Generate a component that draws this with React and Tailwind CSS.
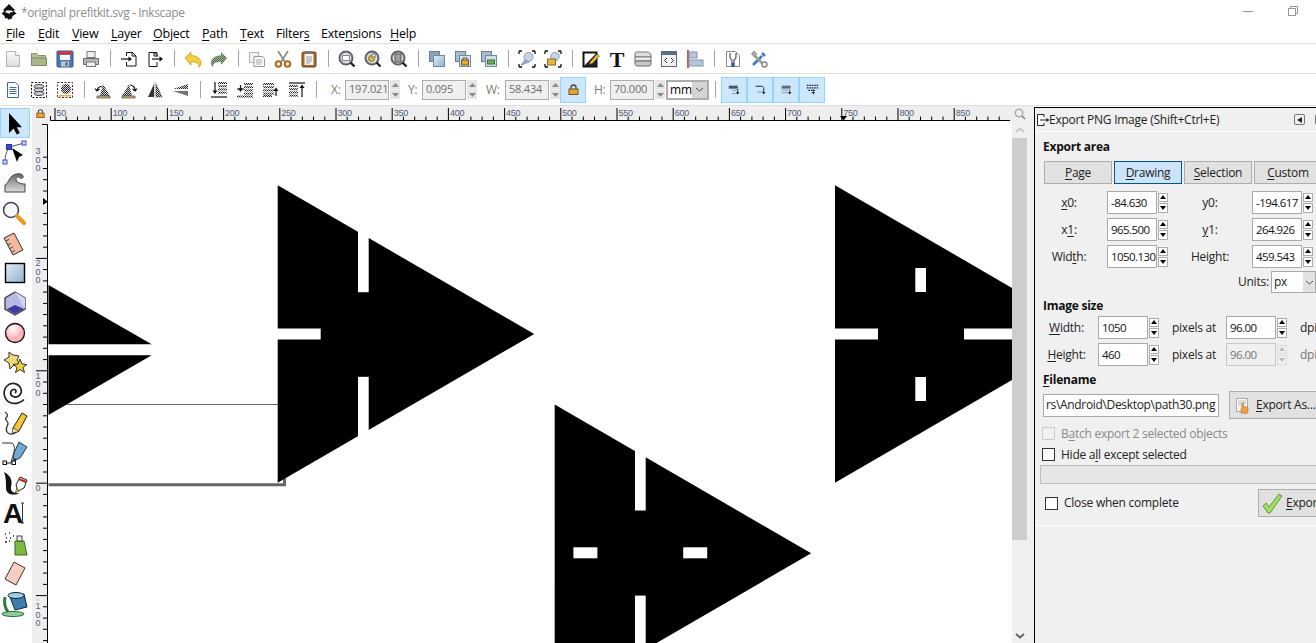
import React from "react";

const I = ({ s = 18, children }) => (
  <svg width={s} height={s} viewBox={`0 0 ${s} ${s}`} className="block shrink-0">{children}</svg>
);
const D = "url(#dith)";
const Defs = () => (
  <defs>
    <pattern id="dith" width="2" height="2" patternUnits="userSpaceOnUse">
      <rect width="2" height="2" fill="#ddd" />
      <rect width="1" height="1" fill="#222" />
      <rect x="1" y="1" width="1" height="1" fill="#222" />
    </pattern>
    <linearGradient id="gb" x1="0" y1="0" x2="1" y2="1"><stop offset="0" stopColor="#e4edf5" /><stop offset="1" stopColor="#8fb0cc" /></linearGradient>
    <linearGradient id="gg" x1="0" y1="0" x2="0" y2="1"><stop offset="0" stopColor="#666" /><stop offset="1" stopColor="#ddd" /></linearGradient>
    <radialGradient id="gp" cx="0.4" cy="0.3"><stop offset="0" stopColor="#fff" /><stop offset="1" stopColor="#ffb0b8" /></radialGradient>
    <linearGradient id="gn" x1="0" y1="0" x2="0" y2="1"><stop offset="0" stopColor="#fafafa" /><stop offset="1" stopColor="#dcdcdc" /></linearGradient>
  </defs>
);

const Mag = ({ inner }) => (
  <I>
    <circle cx="8" cy="8" r="6.5" fill="#d8dde2" stroke="#5c6268" strokeWidth="2" />
    <path d="M12.5 12.5L16.5 16.5" stroke="#222" strokeWidth="2.4" />
    {inner}
  </I>
);

const tb1 = [
  <I key="new"><path d="M2.5 1.5h9l4 4v11h-13z" fill="url(#gn)" stroke="#b5b5b5" /><path d="M11.5 1.5v4h4" fill="#fff" stroke="#b5b5b5" /></I>,
  <I key="open"><path d="M1.5 3.5h5l2 2h7v3h-14z" fill="#b9bd95" stroke="#888c68" /><path d="M1.5 8h15v7.5h-15z" fill="#aab58a" stroke="#7f8a62" /></I>,
  <I key="save"><rect x="1" y="1" width="16" height="16" rx="1" fill="#4d78b4" stroke="#2f5488" /><rect x="2" y="1.5" width="14" height="3" fill="#d23a3a" /><rect x="4" y="5" width="10" height="5" fill="#f4f4f4" /><rect x="5" y="11.5" width="8" height="5" fill="#bfc7d0" /><rect x="9.5" y="12.5" width="2" height="3" fill="#35527c" /></I>,
  <I key="print"><rect x="5" y="1.5" width="8" height="6" fill="#f2f2f2" stroke="#7d7d7d" /><path d="M1.5 8.5h15v6h-15z" fill="#b8b8b8" stroke="#6b6b6b" /><rect x="4.5" y="12" width="9" height="4.5" fill="#f0f0f0" stroke="#777" /></I>,
  "|",
  <I key="imp"><path d="M6.5 6V2.5h6l3.5 3.5v10H6.5V12" fill="#fff" stroke="#111" /><path d="M12 2.5v3.5h4" fill="none" stroke="#111" /><path d="M1 9h9" stroke="#111" strokeWidth="1.2" /><path d="M8.5 6.5L12 9l-3.5 2.5z" fill="#111" /></I>,
  <I key="exp"><path d="M11 6V2.5H3v14h8V12" fill="#fff" stroke="#111" /><path d="M8 2.5L12 6H8z" fill="#fff" stroke="#111" /><path d="M6 9h9" stroke="#111" strokeWidth="1.2" /><path d="M13.5 6.2L17 9l-3.5 2.8z" fill="#111" /></I>,
  "|",
  <I key="undo"><path d="M1 8l6-6v3.6c5 0 10 2.6 10 7.4 0 2-1 3.4-2 4.2.5-3.6-3-5.6-8-5.4V15z" fill="#f3cf3e" stroke="#c99c14" strokeWidth=".8" /></I>,
  <I key="redo"><path d="M17 8l-6-6v3.6C6 5.6 1 8.2 1 13c0 2 1 3.4 2 4.2-.5-3.6 3-5.6 8-5.4V15z" fill="#6f9a63" /><path d="M17 8l-6-6v3.6C6 5.6 1 8.2 1 13c0 2 1 3.4 2 4.2-.5-3.6 3-5.6 8-5.4V15z" fill={D} opacity=".35" /></I>,
  "|",
  <I key="copy"><path d="M1.5 2.5h9v10h-9z" fill="#f3f3f3" stroke="#b0b0b0" /><path d="M6 6.5h8.5l2 2v8H6z" fill="#fafafa" stroke="#999" /><path d="M8 10h6M8 12h6M8 14h5" stroke="#aaa" /></I>,
  <I key="cut"><path d="M4 1l7 11M14 1L7 12" stroke="#888" strokeWidth="1.6" /><circle cx="4.5" cy="14" r="2.8" fill="#fff" stroke="#b06a1a" strokeWidth="2" /><circle cx="13.5" cy="14" r="2.8" fill="#fff" stroke="#b06a1a" strokeWidth="2" /></I>,
  <I key="paste"><rect x="2" y="2" width="14" height="15" rx="1.5" fill="#a86a28" stroke="#6d431a" /><rect x="4.5" y="4" width="9" height="11" fill="#f7f7f7" /><rect x="6" y="1" width="6" height="3" fill="#777" /><path d="M6 7h6M6 9h6M6 11h6M6 13h4" stroke="#999" /></I>,
  "|",
  <Mag key="z1" inner={<rect x="4.5" y="5.5" width="7" height="5" fill="#fff" stroke="#8a8a8a" />} />,
  <Mag key="z2" inner={<><circle cx="7.5" cy="8.5" r="3" fill="#e8b23c" stroke="#8a6a20" /><rect x="8" y="4" width="3" height="3" fill="#fff" stroke="#777" /></>} />,
  <Mag key="z3" inner={<rect x="5" y="4" width="6" height="8" fill="#9aa0a6" stroke="#555" />} />,
  "|",
  <I key="dup"><rect x="1.5" y="1.5" width="10" height="10" fill="#8aa4bb" stroke="#657f96" /><rect x="5.5" y="5.5" width="11" height="11" fill="url(#gb)" stroke="#6d8aa4" /></I>,
  <I key="clo"><rect x="1.5" y="1.5" width="10" height="10" fill="#a8bccc" stroke="#657f96" /><rect x="5.5" y="5.5" width="11" height="11" fill="#d8e4ee" stroke="#6d8aa4" /><rect x="7.5" y="10" width="7" height="5" fill="#e8a92c" stroke="#7a5510" /><path d="M9 10V8h4v2" fill="none" stroke="#555" /></I>,
  <I key="unl"><rect x="1.5" y="1.5" width="10" height="10" fill="#a8bccc" stroke="#657f96" /><rect x="5.5" y="5.5" width="11" height="11" fill="#cfdde6" stroke="#6d8aa4" /><rect x="7.5" y="10" width="7" height="4" fill="#6db05a" stroke="#3f6e33" /></I>,
  "|",
  <I key="grp"><path d="M1 1h3M1 1v3M17 1h-3M17 1v3M1 17h3M1 17v-3M17 17h-3M17 17v-3" stroke="#111" strokeWidth="1.3" /><circle cx="10.5" cy="7" r="4.5" fill="#c5d6e6" stroke="#84a0bb" /><path d="M3 15l4-5 4 2z" fill="#9fb8cf" stroke="#7c97b0" /></I>,
  <I key="ung"><path d="M1 1h3M1 1v3M17 1h-3M17 1v3M1 17h3M1 17v-3M17 17h-3M17 17v-3" stroke="#111" strokeWidth="1.3" /><circle cx="11" cy="6.5" r="4.2" fill="#c5d6e6" stroke="#84a0bb" /><rect x="3.5" y="9" width="8" height="6" fill="#eab53c" stroke="#8c6a1a" /></I>,
  "|",
  <I key="fil"><rect x="1.5" y="2.5" width="13" height="14" fill="#fff" stroke="#111" strokeWidth="2" /><path d="M2 16L14.5 3v13z" fill="#222" /><path d="M8 12l7-8 2.4 2-7 7.6-3.4 1z" fill="#edbf2e" stroke="#333" strokeWidth=".6" /></I>,
  <svg key="T" width="18" height="30" viewBox="0 -6 18 30" className="block"><text x="9" y="16.500" textAnchor="middle" fontFamily="'Liberation Serif',serif" fontWeight="700" fontSize="22" fill="#111">T</text></svg>,
  <I key="lay"><path d="M1 4c0-1.5 1-2 2-2h10c2 0 4 1.5 4 3v2H1z" fill="#dcdfe2" stroke="#777" /><path d="M1 7h16v4H1z" fill="#eceeef" stroke="#777" /><path d="M1 11h16v3c0 1-1 2-2 2H4c-2 0-3-1-3-3z" fill="#c4c8cc" stroke="#666" /></I>,
  <I key="xml"><rect x="1.5" y="1.5" width="15" height="15" fill="#f2f2f2" stroke="#666" /><rect x="1.5" y="1.5" width="15" height="3.5" fill="#5b6f86" /><path d="M7 8l-2.5 2.5L7 13M11 8l2.5 2.5L11 13" fill="none" stroke="#333" /></I>,
  <I key="ali"><rect x="1" y="0" width="2" height="18" fill="#d9534f" /><rect x="3" y="2" width="8" height="6" fill="#b4c8da" stroke="#7e98ad" /><rect x="3" y="10" width="14" height="6" fill="#b4c8da" stroke="#7e98ad" /></I>,
  "|",
  <I key="prf"><path d="M2.5 1.5h9l4 4v11h-13z" fill="#fff" stroke="#888" /><path d="M6 3v4c0 1.5 1 2.5 2 3v6h2v-6c1-.5 2-1.5 2-3V3" fill="none" stroke="#555" strokeWidth="1.2" /><path d="M7.5 13h3v4h-3z" fill="#2d5fa8" /></I>,
  <I key="tls"><path d="M3 15L12 6M12 3l3 3" stroke="#3f79c0" strokeWidth="2.6" /><path d="M14 15L5 6" stroke="#9a9a9a" strokeWidth="2.6" /><path d="M1.5 3.5L4 1l3 3-3 3z" fill="#aaa" stroke="#777" strokeWidth=".6" /><circle cx="14.5" cy="14.5" r="2.5" fill="#fff" stroke="#888" strokeWidth="1.5" /></I>,
];

const Lines = ({ y0 = 2, n = 4, x = 7, w = 9 }) => (
  <>{Array.from({ length: n }).map((_, i) => <rect key={i} x={x} y={y0 + i * 3.2} width={w} height="2" fill={D} />)}</>
);

const tb2a = [
  <I key="a"><path d="M3.5 1.5h8l3 3v12h-11z" fill="#fff" stroke="#3a6db0" /><path d="M5.5 6.5h7M5.5 8.5h7M5.5 10.5h7M5.5 12.5h7" stroke="#3a6db0" /></I>,
  <I key="b"><rect x="1.5" y="1.5" width="15" height="15" fill="#fff" stroke="#111" strokeDasharray="2 1.5" /><ellipse cx="9" cy="5.5" rx="5" ry="2" fill="#cbd3d9" stroke="#444" /><ellipse cx="9" cy="9" rx="5" ry="2" fill="#cbd3d9" stroke="#444" /><ellipse cx="9" cy="12.5" rx="5" ry="2" fill="#cbd3d9" stroke="#444" /></I>,
  <I key="c"><rect x="1.5" y="1.5" width="15" height="15" fill="#fff" stroke="#6b1f1f" strokeDasharray="2 1.5" /><path d="M3 14h12v1.5H3z" fill="#e0b040" /><circle cx="10" cy="8" r="5" fill={D} /></I>,
  "|",
  <I key="d"><path d="M9 3l7 12H6z" fill={D} /><path d="M3 15h13v2H3z" fill="#dcc27a" stroke="#222" strokeWidth=".6" /><path d="M8 5.5A5 5 0 0 0 3 9M1 7.5L3 10l2.5-2" fill="none" stroke="#111" strokeWidth="1.2" /></I>,
  <I key="e"><path d="M9 3L2 15h10z" fill={D} /><path d="M2 15h13v2H2z" fill="#dcc27a" stroke="#222" strokeWidth=".6" /><path d="M10 4a5 5 0 0 1 5 5M17 7.5L15 10l-2.5-2" fill="none" stroke="#111" strokeWidth="1.2" /></I>,
  <I key="f"><path d="M8 3v13H2z" fill="#333" /><path d="M10 3v13h6z" fill={D} stroke="#444" strokeWidth=".5" /><path d="M9 1v16" stroke="#888" strokeDasharray="1.5 1" /></I>,
  <I key="g"><path d="M1 8l15-5v5z" fill={D} /><path d="M1 10l15 5v-5z" fill="#444" opacity=".75" /></I>,
  "|",
  <I key="h"><Lines y0={1} n={4} x={8} w={9} /><path d="M5 1v11" stroke="#111" strokeWidth="1.2" /><path d="M2.500 9.500L5 13l2.500-3.500z" fill="#111" /><path d="M1 16h16" stroke="#111" strokeWidth="1.2" /></I>,
  <I key="i"><Lines y0={2} n={4} x={8} w={9} /><path d="M1 8h7" stroke="#111" strokeWidth="1" /><path d="M4.500 4v5" stroke="#111" strokeWidth="1.2" /><path d="M2 7.500L4.500 11 7 7.500z" fill="#111" /><path d="M1 15.500h16" stroke={D} strokeWidth="2" /></I>,
  <I key="j"><Lines y0={2} n={4} x={1} w={11} /><path d="M14 15V8" stroke="#111" strokeWidth="1.2" /><path d="M11.500 10L14 6.500 16.500 10z" fill="#111" /><path d="M1 15h9" stroke={D} strokeWidth="2" /></I>,
  <I key="k"><Lines y0={4} n={4} x={1} w={9} /><path d="M14 16V5" stroke="#111" strokeWidth="1.2" /><path d="M11.500 7L14 3.500 16.500 7z" fill="#111" /><path d="M1 2h16" stroke="#111" strokeWidth="1.2" /></I>,
  "|",
];

const Btn = ({ children }) => <div className="flex h-full w-[26px] shrink-0 items-center justify-center">{children}</div>;
const Sep = ({ h = "h-[17px]" }) => <div className="flex h-full w-[12px] shrink-0 items-center justify-center"><div className={`w-px bg-[#a5a5a5] ${h}`} /></div>;
const renderBar = (arr) => arr.map((x, i) => (x === "|" ? <Sep key={i} /> : <Btn key={i}>{x}</Btn>));

const TSpin = () => (
  <div className="flex h-[19px] w-[10px] shrink-0 flex-col gap-px bg-[#f0f0f0]">
    <div className="flex flex-1 items-center justify-center bg-[#e6e6e6]"><svg width="7" height="4" className="block"><path d="M3.5 0L7 4H0z" fill="#8a8a8a" /></svg></div>
    <div className="flex flex-1 items-center justify-center bg-[#e6e6e6]"><svg width="7" height="4" className="block"><path d="M3.5 4L7 0H0z" fill="#8a8a8a" /></svg></div>
  </div>
);
const TField = ({ v }) => (
  <div className="flex shrink-0 items-center">
    <div className="flex h-[20px] w-[44px] items-center border border-[#adadad] bg-[#f0f0f0] pl-[3px] text-[11px] tracking-[-0.2px] text-[#6d6d6d]">{v}</div>
    <div className="ml-px"><TSpin /></div>
  </div>
);
const HiBtn = ({ children }) => <div className="flex h-[26px] w-[26px] shrink-0 items-center justify-center border border-[#99d1ff] bg-[#cce8ff]">{children}</div>;
const Lock = ({ s = 11 }) => (
  <svg width={s} height={s} viewBox="0 0 11 11" className="block"><path d="M3 5V3.2C3 1.8 4 1 5.5 1S8 1.8 8 3.2V5" fill="none" stroke="#444" strokeWidth="1.3" /><rect x="1" y="5" width="9" height="5.5" fill="#e9a62e" stroke="#7a5210" /></svg>
);
const Snap = ({ k }) => (
  <svg width="13" height="13" viewBox="0 0 16 16" className="block">
    {k === 0 && <><path d="M1 4h11M1 6h11" stroke="#222" strokeWidth="1.4" /><path d="M5 9h7M5 13h7" stroke="#888" /><path d="M12 7v6" stroke="#222" /><path d="M10 11l2 3 2-3z" fill="#222" /></>}
    {k === 1 && <><path d="M2 4h7c2 0 3 1 3 3v5" fill="none" stroke="#222" strokeWidth="1.2" /><path d="M4 11h8" stroke="#888" /><path d="M10 11l2 3 2-3z" fill="#222" /></>}
    {k === 2 && <><path d="M2 4h11M2 6h11" stroke="#444" strokeWidth="1.4" /><path d="M2 9h8M2 12h8" stroke="#888" /><path d="M12 8v5" stroke="#222" /><path d="M10 11l2 3 2-3z" fill="#222" /></>}
    {k === 3 && <><path d="M1 3h14M1 6h14" stroke="#222" strokeWidth="1.6" strokeDasharray="2 1" /><path d="M3 9h9" stroke="#222" strokeWidth="1.6" strokeDasharray="2 1" /><path d="M9 8v4" stroke="#222" /><path d="M7 11l2 3 2-3z" fill="#222" /></>}
  </svg>
);

const tools = [
  <path key="s" d="M9 5v20l4.600-4.400 3.200 6 3-1.600-3-5.800H22z" fill="#000" />,
  <g key="n"><path d="M5 24C5 15 8 11 10 9M10 9L24 5" fill="none" stroke="#555" /><path d="M12 10l11 7-4 2-2 5z" fill="#000" /><rect x="6.500" y="6.500" width="5" height="5" fill="#3848d8" stroke="#2430a0" /><rect x="22" y="3" width="4" height="4" fill="#d8dcff" stroke="#3848d8" /><rect x="3" y="22" width="4" height="4" fill="#d8dcff" stroke="#3848d8" /></g>,
  <g key="t"><path d="M5 24v-7c3-1 3-5 7-9 4-3 10-3 11 0 1 2-2 3-3 2-1-2-4-1-4 1 0 3 4 5 9 5v8z" fill="url(#gg)" stroke="#444" /></g>,
  <g key="z"><circle cx="11" cy="12" r="7.500" fill="#f4f8fb" stroke="#445" strokeWidth="1.600" /><path d="M17 18l7 7" stroke="#e99a1e" strokeWidth="4.200" strokeLinecap="round" /></g>,
  <g key="m"><path d="M4 10l10-5 9 17-10 5z" fill="#f2b9a0" stroke="#333" /><path d="M6 13l3-1.600M8 17l3-1.600M10 20.500l3-1.600M12 24l3-1.600" stroke="#444" /></g>,
  <g key="r"><rect x="5.500" y="5.500" width="19" height="19" fill="url(#gb)" stroke="#000" strokeWidth="1.400" /></g>,
  <g key="3"><path d="M15 4l10 6v11l-10 6-10-6V10z" fill="#b8b8e8" stroke="#444" strokeWidth="1.400" /><path d="M15 4l10 6v11z" fill="#d4d4f2" /><path d="M7 21l8-4 9 4-9 5z" fill="#3c3ca0" /></g>,
  <circle key="e" cx="15" cy="15" r="9.500" fill="url(#gp)" stroke="#111" strokeWidth="1.300" />,
  <g key="st"><path d="M9 4l4 3 6 1-2 4 3 5-6 0-4 4-1-6-5-3 5-3z" fill="#f1d878" stroke="#333" /><path d="M20 11l2 5 5 .5-4 3 1.500 5-4.500-3-4.500 3 1.500-5-4-3 5-.5z" fill="#f5d23a" stroke="#333" /></g>,
  <path key="sp" d="M15 15c2-1.500 1-4-1.500-3.500-3.500.7-4 5.500-.5 7 5 2 9.500-2.500 8-7.500-2-6-10-7.500-14-3-5 5-3 14 3 16.500 5 2 11 .5 14-3" fill="none" stroke="#222" strokeWidth="1.700" />,
  <g key="pc"><path d="M13 20l9-15 5 3-8 15-6 3z" fill="#f4c62c" stroke="#222" /><path d="M13 20l-1 6 7-3z" fill="#f7e6c0" stroke="#222" strokeWidth=".6" /><path d="M5 4c3 2 3 4 1 6s3 3 2 6-3 5-1 8 6 2 9 0" fill="none" stroke="#333" strokeWidth="1.300" /></g>,
  <g key="pn"><path d="M2 5h10c5 3 1 12-1 19" fill="none" stroke="#333" /><rect x="3" y="23" width="3.500" height="3.500" fill="#fff" stroke="#111" /><rect x="12" y="23" width="3.500" height="3.500" fill="#fff" stroke="#111" /><path d="M6.500 25H12" stroke="#111" /><path d="M19 4l8 5-7 11-7 3 1-8z" fill="#6fa9d6" stroke="#333" /><path d="M15 20l-1.500 3 3-1z" fill="#111" /></g>,
  <g key="cl"><path d="M4 4c6 3 9 8 7 15-1 4 3 7 9 6-6 3-14 2-14-5 0-6 0-11-2-16z" fill="#111" /><path d="M16 17l4-8 7 3-3 8-6 3z" fill="#fff" stroke="#222" /><path d="M19 10l8 3-1.500 2-7-3z" fill="#c22" /><path d="M17 20l-2 5 4-2z" fill="#e6b52c" stroke="#222" strokeWidth=".5" /></g>,
  <g key="tx"><text x="13" y="25" textAnchor="middle" fontFamily="'Liberation Sans',sans-serif" fontWeight="700" fontSize="28" fill="#111">A</text><path d="M21 5h3M22.500 5v20M21 25h3" stroke="#333" /></g>,
  <g key="sy"><path d="M15 13h9l3 14h-12z" fill="#7cba3e" stroke="#3b6b1c" /><rect x="17" y="8" width="5" height="5" fill="#eee" stroke="#444" /><path d="M5 6h1M9 5h1M13 8h1M6 10h1M10 10h1M5 14h2M9 13h1" stroke="#222" strokeWidth="1.600" /></g>,
  <path key="er" d="M14 4l11 6-9 17-11-6z" fill="#f7cfc0" stroke="#333" />,
  <g key="bk"><path d="M10 9l14-3 3 13-12 3z" fill="#3c7fae" stroke="#123" /><ellipse cx="16" cy="7.500" rx="8" ry="3" fill="#9fd0ea" stroke="#123" /><path d="M5 9c-1 5 0 11 3 15" fill="none" stroke="#2c7a3f" strokeWidth="3" /><ellipse cx="13" cy="26" rx="11" ry="2.500" fill="#8fd09a" stroke="#2c6a3a" /></g>,
];

const hTicks = Array.from({ length: 85 }, (_, k) => 55 + 11.24 * k);
const HRuler = () => (
  <svg width="964" height="15" viewBox="48 106 964 15" className="block shrink-0">
    <path d="M50.500 116V120.500H1010" fill="none" stroke="#000" />
    {hTicks.filter((x) => x < 1010).map((x, k) => (
      <path key={k} d={`M${x.toFixed(1)} ${k % 5 === 0 ? 108 : 116.5}V120`} stroke="#000" />
    ))}
    {hTicks.filter((x, k) => k % 5 === 0 && x < 1005).map((x, k) => (
      <text key={k} x={x + 1.5} y="115.500" fontFamily="'Liberation Sans',sans-serif" fontSize="9" fill="#4d5a78">{50 + 50 * k}</text>
    ))}
    <path d="M840 116h7l-3.500 4.500z" fill="#000" />
  </svg>
);

const vTicks = [];
for (let k = -29; k < 15; k++) vTicks.push({ y: 483.2 + 11.24 * k, k });
const VRuler = () => (
  <svg width="16" height="522" viewBox="32 121 16 522" className="block shrink-0 bg-[#eeeeee]">
    <path d="M42 124.500H47.500V643" fill="none" stroke="#000" />
    {vTicks.filter((t) => t.y > 127).map((t) => (
      <path key={t.k} d={`M${t.k % 10 === 0 ? 36 : 43} ${t.y.toFixed(1)}H47`} stroke="#000" />
    ))}
    {[[146.0, "300"], [258.4, "200"], [370.8, "100"]].map(([y, l]) =>
      l.split("").map((c, i) => (
        <text key={l + i} x="38" y={y + 8 + i * 8.5} textAnchor="middle" fontFamily="'Liberation Sans',sans-serif" fontSize="9" fill="#5d5d70">{c}</text>
      ))
    )}
    <text x="38" y="491" textAnchor="middle" fontFamily="'Liberation Sans',sans-serif" fontSize="9" fill="#5d5d70">0</text>
    <path d="M36 600H39" stroke="#bbb" />
    {"100".split("").map((c, i) => (
      <text key={i} x="38" y={609 + i * 8.5} textAnchor="middle" fontFamily="'Liberation Sans',sans-serif" fontSize="9" fill="#5d5d70">{c}</text>
    ))}
    <path d="M43 198l4.500 3.500-4.500 3.500z" fill="#000" />
  </svg>
);

const Tri = ({ x, y, mode }) => {
  const cy = y + 148.8;
  return (
    <g>
      <path d={`M${x} ${y}L${x + 256.5} ${cy}L${x} ${y + 297.6}z`} fill="#000" />
      {mode === "long" && (
        <>
          <rect x={x + 80.3} y={y + 30} width="10.700" height={cy - 41.8 - y - 30} fill="#fff" />
          <rect x={x + 80.3} y={cy + 42.8} width="10.700" height="80" fill="#fff" />
          <rect x={x - 1} y={cy - 5.5} width="44" height="11" fill="#fff" />
        </>
      )}
      {mode === "short" && (
        <>
          <rect x={x + 80.3} y={cy - 66} width="10.700" height="24" fill="#fff" />
          <rect x={x + 80.3} y={cy + 43} width="10.700" height="24" fill="#fff" />
          <rect x={x - 1} y={cy - 5.5} width="44" height="11" fill="#fff" />
          <rect x={x + 129} y={cy - 5.5} width="60" height="11" fill="#fff" />
        </>
      )}
      {mode === "d" && (
        <>
          <rect x={x + 80.3} y={y + 30} width="10.700" height={cy - 42.8 - y - 30} fill="#fff" />
          <rect x={x + 80.3} y={cy + 42.3} width="10.700" height="120" fill="#fff" />
          <rect x={x + 18.7} y={cy - 6} width="24" height="11" fill="#fff" />
          <rect x={x + 128.5} y={cy - 6} width="24" height="11" fill="#fff" />
        </>
      )}
    </g>
  );
};

const Canvas = () => (
  <svg width="964" height="522" viewBox="48 121 964 522" className="block shrink-0 bg-white">
    <path d="M60 404.500H278" stroke="#666" />
    <path d="M48.500 484.700H284.500V478" fill="none" stroke="#666" strokeWidth="3" />
    <path d="M48.500 285L151.700 344.300H48.500zM48.500 355.300H151.700L48.500 415z" fill="#000" />
    <Tri x={277.7} y={185.2} mode="long" />
    <Tri x={835} y={185.2} mode="short" />
    <Tri x={554.7} y={404.5} mode="d" />
  </svg>
);

const Scrollbar = () => (
  <div className="flex h-[522px] w-[15px] shrink-0 flex-col items-center bg-[#f0f0f0]">
    <div className="flex h-[17px] w-full items-center justify-center pt-[1px]">
      <svg width="10" height="6" className="block"><path d="M1 5l4-3.500L9 5" fill="none" stroke="#c8c8c8" strokeWidth="2" /></svg>
    </div>
    <div className="h-[402px] w-full bg-[#cdcdcd]" />
    <div className="flex-1" />
    <div className="flex h-[10px] w-full items-start justify-center">
      <svg width="10" height="6" className="block"><path d="M1 1l4 3.500L9 1" fill="none" stroke="#606060" strokeWidth="2" /></svg>
    </div>
  </div>
);

const DSpin = ({ off }) => {
  const f = off ? "#bbb" : "#000";
  const b = off ? "border-[#dcdcdc] bg-[#f0f0f0]" : "border-[#adadad] bg-white";
  return (
    <div className="flex h-[20px] w-[10px] shrink-0 flex-col gap-px">
      <div className={`flex flex-1 items-center justify-center border ${b}`}><svg width="6" height="4" className="block"><path d="M3 0l3 4H0z" fill={f} /></svg></div>
      <div className={`flex flex-1 items-center justify-center border ${b}`}><svg width="6" height="4" className="block"><path d="M3 4l3-4H0z" fill={f} /></svg></div>
    </div>
  );
};
const DField = ({ v, off }) => (
  <div className="flex shrink-0 items-center gap-px">
    <div className={`flex h-[23px] w-[50px] items-center overflow-hidden whitespace-nowrap border pl-[3px] text-[11.5px] tracking-[-0.55px] ${off ? "border-[#c8c8c8] bg-[#f0f0f0] text-[#777]" : "border-[#a9a9a9] bg-white text-[#111]"}`}>{v}</div>
    <DSpin off={off} />
  </div>
);
const U = ({ children }) => <span className="underline underline-offset-2">{children}</span>;
const Head = ({ children, cls }) => <div className={`h-[16px] font-bold leading-[16px] text-[#111] ${cls}`}>{children}</div>;
const AreaBtn = ({ children, on }) => (
  <div className={`flex h-[23px] w-[68px] shrink-0 items-center justify-center border ${on ? "border-[#005499] bg-[#cce4f7]" : "border-[#adadad] bg-[#e1e1e1]"}`}>{children}</div>
);
const Row = ({ a, v1, b, v2 }) => (
  <div className="flex h-[23px] items-center">
    <div className="mr-[12px] w-[52px] shrink-0 text-center">{a}</div>
    <DField v={v1} />
    <div className="w-[84px] shrink-0 text-center">{b}</div>
    <DField v={v2} />
  </div>
);
const Check = ({ off }) => <div className={`h-[13px] w-[13px] shrink-0 border ${off ? "border-[#cccccc] bg-[#f0f0f0]" : "border-[#333] bg-white"}`} />;

const Dock = () => (
  <div className="mt-px flex h-[536px] w-[282px] shrink-0 flex-col overflow-hidden border-l border-t border-black bg-[#f0f0f0] text-[#222]">
    <div className="flex h-[24px] shrink-0 items-center border-b border-white">
      <div className="ml-px">
        <svg width="14" height="14" viewBox="0 0 14 14" className="block"><path d="M8 4V1.500H1.500v11H8V10" fill="#fff" stroke="#222" /><path d="M4 7h8" stroke="#222" /><path d="M10.500 5L13.500 7l-3 2z" fill="#222" /></svg>
      </div>
      <div className="-ml-px whitespace-nowrap">Export PNG Image (Shift+Ctrl+E)</div>
      <div className="ml-auto mr-[-10px] flex items-center gap-[10px]">
        <div className="flex h-[11px] w-[11px] items-center justify-center rounded-[2px] border border-[#777]"><svg width="5" height="6" className="block"><path d="M5 0v6L0 3z" fill="#222" /></svg></div>
        <div className="h-[11px] w-[11px] rounded-[2px] border border-[#777]" />
      </div>
    </div>
    <div className="flex flex-1 flex-col pl-[8px]">
      <Head cls="mt-[7px]">Export area</Head>
      <div className="ml-px mt-[6px] flex gap-[2px]">
        <AreaBtn><span><U>P</U>age</span></AreaBtn>
        <AreaBtn on><span><U>D</U>rawing</span></AreaBtn>
        <AreaBtn><span><U>S</U>election</span></AreaBtn>
        <AreaBtn><span><U>C</U>ustom</span></AreaBtn>
      </div>
      <div className="mt-[7px]"><Row a={<span><U>x</U>0:</span>} v1="-84.630" b={<span>y0:</span>} v2="-194.617" /></div>
      <div className="mt-[4px]"><Row a={<span>x<U>1</U>:</span>} v1="965.500" b={<span><U>y</U>1:</span>} v2="264.926" /></div>
      <div className="mt-[4px]"><Row a={<span>Wid<U>t</U>h:</span>} v1="1050.130" b={<span>Height:</span>} v2="459.543" /></div>
      <div className="ml-[195px] mt-[3px] flex h-[22px] items-center">
        <span className="w-[33px] shrink-0">Units:</span>
        <div className="flex h-[22px] w-[45px] shrink-0 items-center justify-between border border-[#a9a9a9] bg-white pl-[2px]">
          <span>px</span>
          <div className="flex h-full w-[12px] items-center bg-[#e1e1e1] pl-[2px]"><svg width="9" height="5" className="block"><path d="M1 1l3.500 3L8 1" fill="none" stroke="#555" /></svg></div>
        </div>
      </div>
      <Head cls="mt-[5px]">Image size</Head>
      <div className="mt-[2px] flex h-[23px] items-center">
        <div className="mr-[8px] w-[47px] shrink-0 text-center"><U>W</U>idth:</div>
        <DField v="1050" />
        <div className="ml-[13px] w-[54px] shrink-0 whitespace-nowrap">pixels at</div>
        <DField v="96.00" />
        <div className="ml-[13px]">dpi</div>
      </div>
      <div className="mt-[4px] flex h-[23px] items-center">
        <div className="mr-[8px] w-[47px] shrink-0 text-center"><U>H</U>eight:</div>
        <DField v="460" />
        <div className="ml-[13px] w-[54px] shrink-0 whitespace-nowrap">pixels at</div>
        <DField v="96.00" off />
        <div className="ml-[13px] text-[#777]">dpi</div>
      </div>
      <Head cls="mt-[6px]"><U>F</U>ilename</Head>
      <div className="mt-[3px] flex h-[28px] items-center">
        <div className="flex h-[23px] w-[176px] shrink-0 items-center overflow-hidden whitespace-nowrap border border-[#a9a9a9] bg-white pl-[2px] tracking-[-0.33px]">rs\Android\Desktop\path30.png</div>
        <div className="ml-[10px] flex h-[28px] w-[100px] shrink-0 items-center border border-[#adadad] bg-[#e1e1e1] pl-[5px]">
          <svg width="17" height="17" viewBox="0 0 17 17" className="mr-[4px] block shrink-0"><path d="M1.500 1.500h11v13h-11z" fill="#fafafa" stroke="#aaa" /><path d="M3 4h8M3 6h8M3 8h6" stroke="#bbb" /><path d="M6 16v-4l1-3V6h1.500v4l1-.5 1 .5 1-.5 1.500 1V14l-1 2.500z" fill="#f0a040" stroke="#a8641c" strokeWidth=".5" /></svg>
          <span className="whitespace-nowrap"><U>E</U>xport As...</span>
        </div>
      </div>
      <div className="-ml-px mt-[8px] flex h-[13px] items-center text-[#8a8a8a]">
        <Check off />
        <span className="ml-[6px] whitespace-nowrap">B<U>a</U>tch export 2 selected objects</span>
      </div>
      <div className="-ml-px mt-[8px] flex h-[13px] items-center">
        <Check />
        <span className="ml-[6px] whitespace-nowrap">Hide a<U>l</U>l except selected</span>
      </div>
      <div className="-ml-[3px] mt-[4px] h-[19px] w-[290px] shrink-0 border border-[#bcbcbc] bg-[#e6e6e6]" />
      <div className="mt-[5px] flex h-[28px] items-center">
        <div className="ml-[2px]"><Check /></div>
        <span className="ml-[6px] w-[194px] shrink-0 whitespace-nowrap">Close when complete</span>
        <div className="flex h-[28px] w-[70px] shrink-0 items-center border border-[#adadad] bg-[#e1e1e1] pl-[3px]">
          <svg width="21" height="21" viewBox="0 0 21 21" className="mr-[3px] block shrink-0"><path d="M1 13l3-3 3 4L17 1l3 2L8 20h-2z" fill="#a4dc5c" stroke="#5b9a35" /></svg>
          <span><U>E</U>xport</span>
        </div>
      </div>
      <div className="-ml-[8px] mt-[8px] w-[290px] border-t border-white" />
    </div>
  </div>
);

const menu = [
  ["w-[32px]", <span key="1"><U>F</U>ile</span>],
  ["w-[34px]", <span key="2"><U>E</U>dit</span>],
  ["w-[39px]", <span key="3"><U>V</U>iew</span>],
  ["w-[42px]", <span key="4"><U>L</U>ayer</span>],
  ["w-[49px]", <span key="5"><U>O</U>bject</span>],
  ["w-[38px]", <span key="6"><U>P</U>ath</span>],
  ["w-[36px]", <span key="7"><U>T</U>ext</span>],
  ["w-[45px]", <span key="8">Filter<U>s</U></span>],
  ["w-[69px]", <span key="9">Exte<U>n</U>sions</span>],
  ["w-[40px]", <span key="10"><U>H</U>elp</span>],
];

export default function App() {
  return (
    <div className="flex h-[643px] w-[1316px] flex-col overflow-hidden bg-white font-['Open_Sans',sans-serif] text-[12px] tracking-[-0.25px] text-black">
      <div className="flex h-[22px] shrink-0 items-center">
        <div className="ml-[1px] mr-[4px] mt-[2px]">
          <svg width="16" height="16" viewBox="0 0 16 16" className="block">
            <Defs />
            <path d="M8 0l6 6-1.500 1 3 2.500-4 2.500-.5 2.500-2 .5L8 16l-2-2-2 .5-.5-2.500-3-2.500 3-2.500L2 6z" fill="#111" />
            <path d="M5 6.500h6l1 1.500-3 .5-.5 1.500L7 9 4.500 8.500z" fill="#fff" />
          </svg>
        </div>
        <span className="mt-[3px] whitespace-nowrap tracking-[-0.37px] text-[#8c8c8c]">*original prefitkit.svg - Inkscape</span>
        <div className="ml-auto mr-[18px] flex items-center gap-[35px]">
          <svg width="10" height="10" className="block"><path d="M0 5.500h10" stroke="#999" /></svg>
          <svg width="10" height="10" className="block"><path d="M2.500 2.500V.5h7v7h-2" fill="none" stroke="#999" /><rect x=".5" y="2.500" width="7" height="7" fill="#fff" stroke="#999" /></svg>
        </div>
      </div>
      <div className="flex h-[22px] shrink-0 items-center border-b border-[#dfdfdf] pl-[6px] pt-[3px] text-[12.5px]">
        {menu.map(([w, el], i) => <div key={i} className={`shrink-0 ${w}`}>{el}</div>)}
      </div>
      <div className="flex h-[30px] shrink-0 items-center border-b border-[#dfdfdf]">{renderBar(tb1)}</div>
      <div className="flex h-[32px] shrink-0 items-center border-b border-[#dfdfdf]">
        {renderBar(tb2a)}
        <span className="ml-[9px] w-[14px] shrink-0 text-[#8a7a6a]">X:</span>
        <TField v="197.021" />
        <span className="ml-[8px] w-[14px] shrink-0 text-[#8a7a6a]">Y:</span>
        <TField v="0.095" />
        <span className="ml-[9px] w-[19px] shrink-0 text-[#8a7a6a]">W:</span>
        <TField v="58.434" />
        <HiBtn><Lock /></HiBtn>
        <span className="ml-[8px] w-[16px] shrink-0 text-[#8a7a6a]">H:</span>
        <TField v="70.000" />
        <div className="ml-px flex h-[20px] w-[43px] shrink-0 items-center justify-between border-2 border-[#adadad] bg-white pl-[2px] tracking-normal">
          <span>mm</span>
          <div className="flex h-full w-[15px] items-center justify-center bg-[#d4d4d4]"><svg width="9" height="5" className="block"><path d="M1 1l3.500 3L8 1" fill="none" stroke="#444" /></svg></div>
        </div>
        <Sep h="h-[17px]" />
        {[0, 1, 2, 3].map((k) => <HiBtn key={k}><Snap k={k} /></HiBtn>)}
      </div>
      <div className="flex min-h-0 flex-1">
        <div className="flex w-[32px] shrink-0 flex-col bg-white pt-[2px]">
          {tools.map((t, i) => (
            <div key={i} className={`h-[30px] w-[30px] shrink-0 ${i === 0 ? "border border-[#99d1ff] bg-[#cce8ff]" : ""}`}>
              <svg width="30" height="30" viewBox="0 0 30 30" className={`block ${i === 0 ? "-m-px" : ""}`}>{t}</svg>
            </div>
          ))}
        </div>
        <div className="flex w-[995px] shrink-0 flex-col bg-[#eeeeee]">
          <div className="flex h-[15px] shrink-0">
            <div className="flex w-[16px] shrink-0 items-center justify-center"><Lock s={9} /></div>
            <HRuler />
            <div className="flex w-[15px] shrink-0 items-center justify-center">
              <svg width="12" height="12" viewBox="0 0 12 12" className="block"><circle cx="5" cy="5" r="3.800" fill="#eee" stroke="#aaa" strokeWidth="1.400" /><path d="M8 8l3 3" stroke="#888" strokeWidth="1.600" /></svg>
            </div>
          </div>
          <div className="flex shrink-0">
            <VRuler />
            <Canvas />
            <Scrollbar />
          </div>
        </div>
        <div className="w-[7px] shrink-0 bg-[#f0f0f0]" />
        <Dock />
      </div>
    </div>
  );
}
